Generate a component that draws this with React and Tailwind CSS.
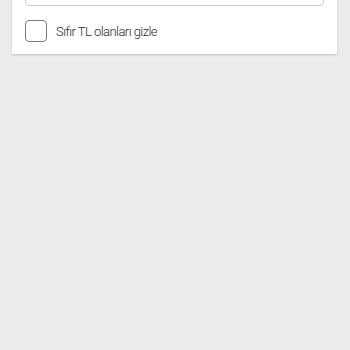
export default function App() {
  return (
    <div className="h-[350px] w-[350px] overflow-hidden bg-[#ebebeb]">
      <div className="ml-[12px] mt-[-40px] w-[325px] bg-white px-[13px] pt-[13px] pb-[12px] shadow-[0_1px_2px_rgba(0,0,0,0.18)]">
        <div className="h-[33px] rounded-[4px] border border-[#cccccc] bg-white" />
        <label className="mt-[14px] flex items-center gap-[9px]">
          <span className="h-[22px] w-[22px] shrink-0 rounded-[4px] border-[1.5px] border-[#7a7a7a] bg-white" />
          <span className="pt-[1px] text-[13px] font-light leading-none tracking-[-0.55px] text-[#2a2a2a]" style={{ fontFamily: '"Roboto", sans-serif' }}>Sıfır TL olanları gizle</span>
        </label>
      </div>
    </div>
  );
}
